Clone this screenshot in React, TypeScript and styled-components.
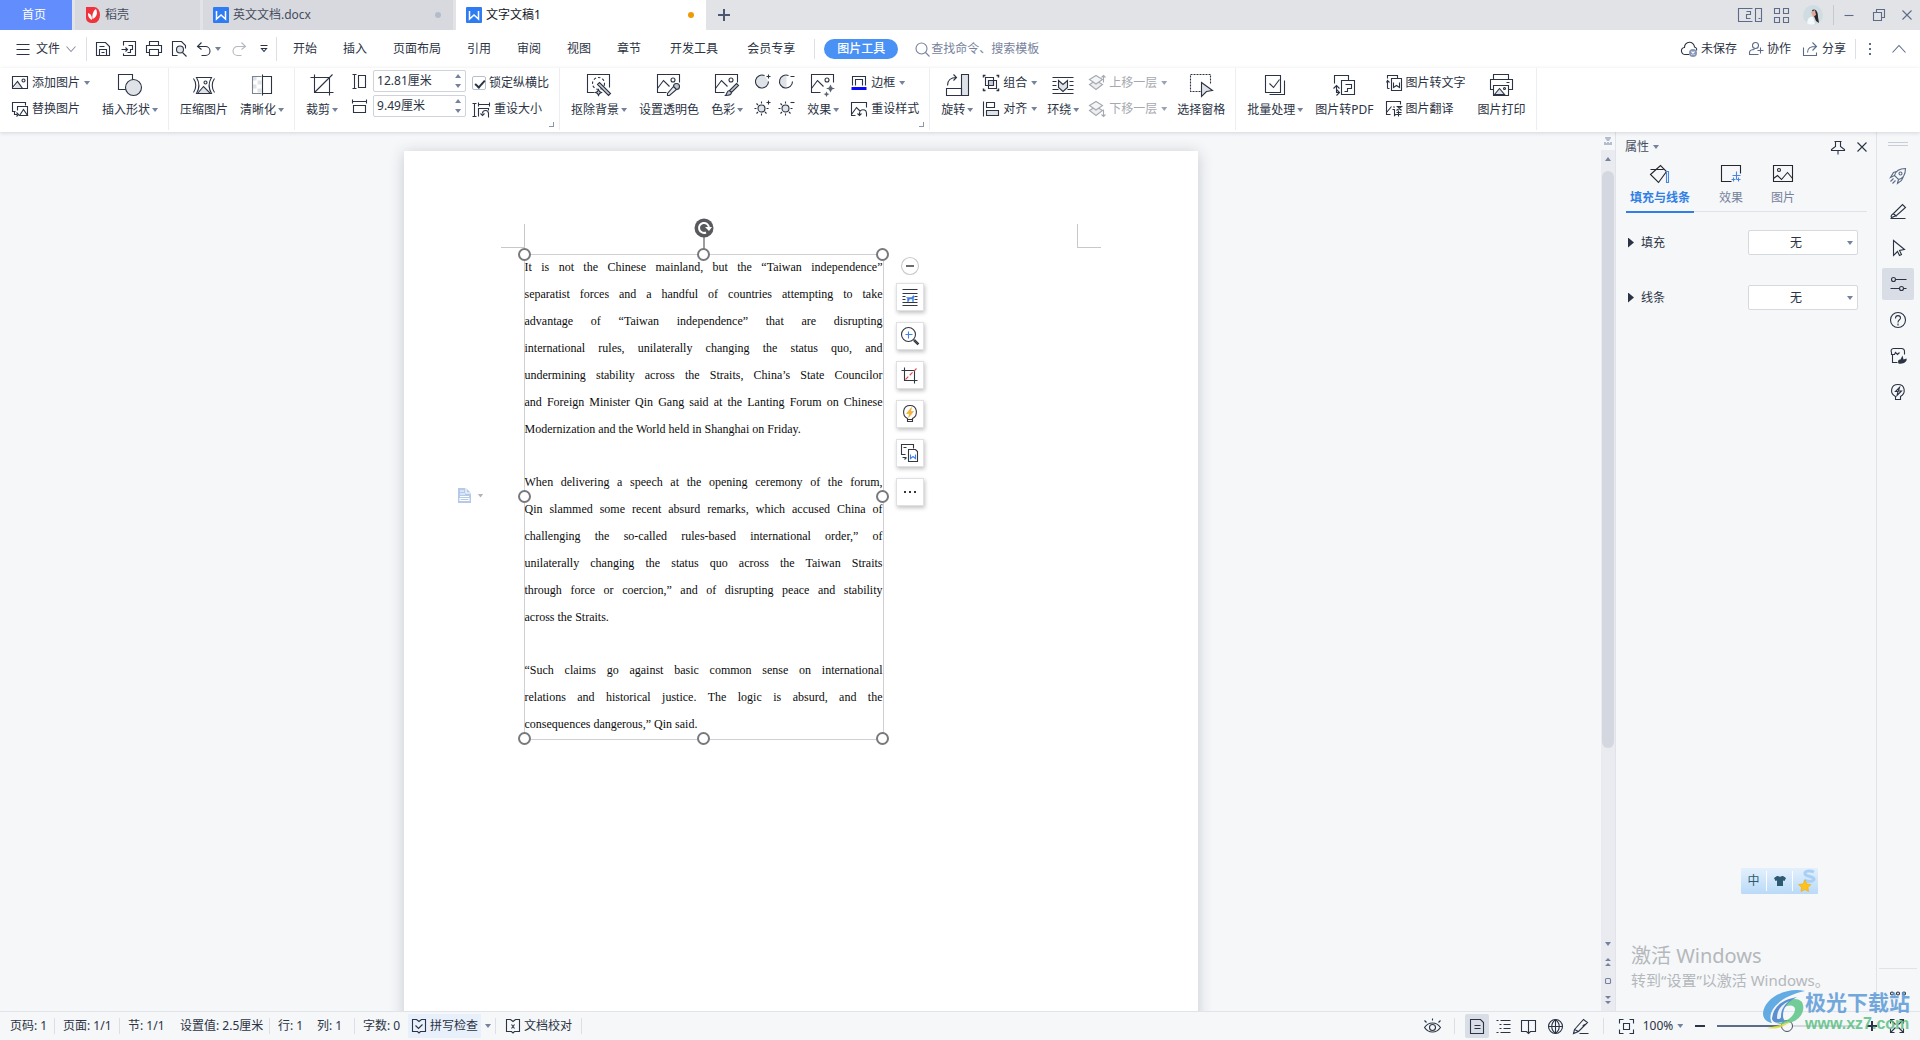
import React, { ReactNode } from "react";
import styled, { createGlobalStyle, css } from "styled-components";

const ink = "#2b3344";
const slate = "#5c6b8a";
const accent = "#2f7fe6";
const soft = "#dfe2e6";

const GlobalStyle = createGlobalStyle`
  * { box-sizing: border-box; }
  body {
    margin: 0;
    font: 12px/16px "Noto Sans", "Noto Sans CJK SC", sans-serif;
    color: ${ink};
    background: #f5f7f9;
  }
  button, input, select {
    font: inherit; color: inherit; background: none; border: 0; padding: 0; margin: 0;
  }
  button { white-space: nowrap; cursor: default; }
`;

/* ---------- primitives ---------- */

const Svg = styled.svg<{ $tone?: string }>`
  display: block;
  flex: none;
  fill: none;
  stroke: ${(p) => p.$tone ?? "currentColor"};
  stroke-width: 1.1;
  overflow: visible;
`;

/* Line drawings sit half a pixel in, so that whole coordinates give sharp strokes. */
type IconProps = { w?: number; h?: number; tone?: string; flat?: boolean; children: ReactNode };
const Icon = ({ w = 16, h = w, tone, flat, children }: IconProps) => (
  <Svg width={w} height={h} viewBox={flat ? `0 0 ${w} ${h}` : `-0.5 -0.5 ${w} ${h}`} $tone={tone} aria-hidden>
    {children}
  </Svg>
);

const Caret = styled.span<{ $up?: boolean; $tone?: string }>`
  flex: none;
  width: 6px;
  height: 4px;
  background: ${(p) => p.$tone ?? "#76829c"};
  clip-path: ${(p) => (p.$up ? "polygon(50% 0, 100% 100%, 0 100%)" : "polygon(0 0, 100% 0, 50% 100%)")};
`;

const Rule = styled.span<{ $h: number; $tone?: string }>`
  flex: none;
  width: 1px;
  height: ${(p) => p.$h}px;
  background: ${(p) => p.$tone ?? "#dcdfe5"};
`;

const Spacer = styled.span`
  flex: 1;
`;

const IconButton = styled.button<{ $w?: number; $h?: number; $on?: boolean }>`
  flex: none;
  display: flex;
  align-items: center;
  justify-content: center;
  gap: 4px;
  width: ${(p) => p.$w ?? 24}px;
  height: ${(p) => p.$h ?? 24}px;
  border-radius: 2px;
  background: ${(p) => (p.$on ? "#d9dee6" : "transparent")};
`;

/* ---------- shell ---------- */

const Shell = styled.div`
  position: relative;
  display: flex;
  flex-direction: column;
  height: 100vh;
  overflow: hidden;
`;

/* ---------- title bar ---------- */

const TitleBar = styled.header`
  display: flex;
  align-items: center;
  gap: 3px;
  height: 30px;
  flex: none;
  background: #e2e3e7;
`;

const DocTab = styled.button<{ $w: number; $kind?: "home" | "active" }>`
  display: flex;
  align-items: center;
  gap: 4px;
  width: ${(p) => p.$w}px;
  height: 30px;
  padding: 0 12px 0 10px;
  background: #d8d9de;
  color: #454d60;
  ${(p) => p.$kind === "home" && css`
    justify-content: center;
    padding: 0 4px 0 0;
    background: #618dfd;
    color: #fff;
  `}
  ${(p) => p.$kind === "active" && css`
    background: #fff;
    color: #14181f;
  `}
`;

const Dot = styled.span<{ $tone: string }>`
  width: 6px;
  height: 6px;
  border-radius: 50%;
  background: ${(p) => p.$tone};
`;

const WindowTools = styled.div`
  display: flex;
  align-items: center;
  color: ${slate};
`;

/* ---------- menu bar ---------- */

const MenuBar = styled.nav`
  display: flex;
  align-items: center;
  height: 38px;
  flex: none;
  padding: 0 6px 0 10px;
  background: #fff;
`;

const FileButton = styled.button`
  display: flex;
  align-items: center;
  gap: 6px;
  width: 76px;
  padding-left: 6px;
  height: 24px;
`;

const QuickBar = styled.div`
  display: flex;
  align-items: center;
  width: 189px;
  padding-left: 3px;
`;

const MenuTab = styled.button<{ $wide?: boolean }>`
  height: 24px;
  padding: 0 13px;
  margin-left: ${(p) => (p.$wide ? 3 : 0)}px;
`;

const MenuTabs = styled.div`
  display: flex;
  padding: 0 6px 0 3px;
`;

const Pill = styled.button`
  width: 74px;
  height: 20px;
  margin: 0 17px 0 9px;
  border-radius: 10px;
  background: #4a91f5;
  color: #fff;
  font-weight: 500;
`;

const Search = styled.label`
  display: flex;
  align-items: center;
  gap: 2px;
  color: #76829c;
  input { width: 130px; outline: 0; }
  input::placeholder { color: #76829c; opacity: 1; }
`;

const AccountBar = styled.div`
  display: flex;
  gap: 12px;
  padding-right: 9px;
`;

const AccountButton = styled.button`
  display: flex;
  align-items: center;
  gap: 4px;
`;

/* ---------- ribbon ---------- */

const Ribbon = styled.section`
  display: flex;
  height: 64px;
  flex: none;
  background: #fff;
  position: relative;
  z-index: 1;
  box-shadow: 0 1px 4px rgba(40, 50, 70, 0.16);
`;

const Group = styled.div<{ $tight?: boolean }>`
  position: relative;
  display: flex;
  gap: ${(p) => (p.$tight ? 10 : 12)}px;
  height: 62px;
  padding: 0 10px 0 11px;
  border-right: 1px solid #eceef1;
`;

const BigButton = styled.button`
  display: flex;
  flex-direction: column;
  align-items: center;
  height: 52px;
  padding-top: 4px;
`;

const BigIcon = styled.span`
  display: flex;
  align-items: center;
  height: 26px;
  margin-bottom: 4px;
`;

const Caption = styled.span`
  display: flex;
  align-items: center;
  gap: 2px;
`;

const Stack = styled.div`
  display: flex;
  flex-direction: column;
  gap: 6px;
  padding-top: 5px;
`;

const Quad = styled.div`
  display: grid;
  grid-template: 20px 20px / 16px 16px;
  gap: 6px 8px;
  padding-top: 4px;
`;

const SmallButton = styled.button<{ $off?: boolean }>`
  display: flex;
  align-items: center;
  gap: 4px;
  height: 20px;
  color: ${(p) => (p.$off ? "#a6a9b0" : "inherit")};
`;

const SizeRow = styled.div`
  display: flex;
  align-items: center;
  gap: 6px;
  height: 22px;
`;

const SizeStack = styled.div`
  display: flex;
  flex-direction: column;
  gap: 3px;
  margin-right: -6px;
  padding: 2px 0 0 2px;
`;

const SizeField = styled.span`
  display: flex;
  width: 93px;
  height: 22px;
  border: 1px solid #cdd2db;
  border-radius: 2px;
  input { width: 78px; padding-left: 3px; outline: 0; }
`;

const Spinner = styled.span`
  display: flex;
  flex-direction: column;
  justify-content: space-around;
  button { display: flex; padding: 3px; }
`;

const CheckRow = styled.label`
  display: flex;
  align-items: center;
  gap: 3px;
  height: 20px;
`;

const CheckBox = styled.input`
  && {
    appearance: none;
    position: relative;
    width: 14px;
    height: 14px;
    border: 1px solid #b9c0cc;
    border-radius: 2px;
  }
  &:checked::after {
    content: "";
    position: absolute;
    left: 4px;
    top: 1px;
    width: 4px;
    height: 8px;
    border: solid ${ink};
    border-width: 0 2px 2px 0;
    transform: rotate(42deg);
  }
`;

const Launcher = styled.span`
  position: absolute;
  right: 5px;
  bottom: 3px;
  width: 5px;
  height: 5px;
  border: solid #8b96ab;
  border-width: 0 1px 1px 0;
`;

/* ---------- workspace ---------- */

const Workspace = styled.main`
  display: flex;
  flex: 1;
  min-height: 0;
`;

const Canvas = styled.div`
  flex: 1;
  min-width: 0;
  overflow: hidden;
  padding-top: 19px;
`;

const Page = styled.article`
  position: relative;
  width: 794px;
  min-height: 1123px;
  margin: 0 auto;
  padding: 103px 120px;
  background: #fff;
  box-shadow: 0 2px 14px rgba(40, 46, 58, 0.22);
`;

const CropMark = styled.span<{ $side: "left" | "right" }>`
  position: absolute;
  top: 73px;
  ${(p) => p.$side}: 97px;
  width: 24px;
  height: 24px;
  border: solid #c6c8cc;
  border-width: ${(p) => (p.$side === "left" ? "0 1px 1px 0" : "0 0 1px 1px")};
`;

const Picture = styled.figure`
  position: relative;
  width: 360px;
  height: 486px;
  margin: 0;
  border: 1px solid #cfd0d3;
  color: #0c0c0c;
  font: 12px/27px "Liberation Serif", serif;
`;

const TextLine = styled.span<{ $last?: boolean }>`
  display: block;
  height: 27px;
  white-space: nowrap;
  text-align: justify;
  text-align-last: ${(p) => (p.$last ? "left" : "justify")};
`;

const Paragraph = styled.p`
  margin: -1px 0 27px;
`;

const Handle = styled.span<{ $x: number; $y: number }>`
  position: absolute;
  left: ${(p) => p.$x}%;
  top: ${(p) => p.$y}%;
  width: 13px;
  height: 13px;
  margin: -7px 0 0 -7px;
  border: 2px solid #77797d;
  border-radius: 50%;
  background: #fff;
`;

const Rotator = styled.span`
  position: absolute;
  left: 50%;
  top: -37px;
  margin-left: -10px;
`;

const PasteHint = styled.span`
  position: absolute;
  left: -67px;
  top: 233px;
  display: flex;
  align-items: center;
  gap: 7px;
`;

const FloatBar = styled.div`
  position: absolute;
  left: 371px;
  top: 2px;
  display: flex;
  flex-direction: column;
  align-items: center;
  gap: 11px;
`;

const FloatButton = styled.button`
  display: flex;
  align-items: center;
  justify-content: center;
  width: 28px;
  height: 28px;
  border: 1px solid #e0e1e4;
  background: #fff;
  color: #33373f;
  box-shadow: 1px 2px 4px rgba(0, 0, 0, 0.24);
`;

const Collapse = styled.button`
  display: flex;
  align-items: flex-start;
  height: 15px;
`;

/* ---------- scrollbar ---------- */

const ScrollRail = styled.div`
  display: flex;
  flex-direction: column;
  align-items: center;
  flex: none;
  width: 14px;
  padding-top: 5px;
  background: linear-gradient(#f5f7f9 18px, #e9ebf0 18px);
`;

const RailTop = styled.div`
  display: flex;
  flex-direction: column;
  align-items: center;
  gap: 11px;
`;

const Thumb = styled.span`
  width: 12px;
  flex: 0 0 66%;
  margin-top: 10px;
  border-radius: 6px;
  background: #d4d7e0;
`;

const RailEnd = styled.div`
  display: flex;
  flex-direction: column;
  align-items: center;
  gap: 12px;
  margin-top: auto;
  padding-bottom: 7px;
`;

/* ---------- property panel ---------- */

const Panel = styled.aside`
  flex: none;
  width: 262px;
  padding: 6px 9px 0 10px;
  border: solid #e0e3e8;
  border-width: 0 1px;
  background: #f5f7f9;
`;

const PanelHead = styled.div`
  display: flex;
  align-items: center;
  height: 18px;
  margin: 0 -7px 0 -1px;
`;

const PanelTitle = styled.button`
  display: flex;
  align-items: center;
  gap: 4px;
  color: #454d60;
`;

const PanelTabs = styled.div`
  display: flex;
  gap: 22px;
  height: 56px;
  border-bottom: 1px solid #dfe2e8;
`;

const PanelTab = styled.button<{ $on?: boolean }>`
  display: flex;
  flex-direction: column;
  align-items: center;
  gap: 7px;
  width: ${(p) => (p.$on ? 68 : 30)}px;
  height: 57px;
  padding-top: 9px;
  color: ${(p) => (p.$on ? accent : "#76829c")};
  font-weight: ${(p) => (p.$on ? 700 : 400)};
  border-bottom: 2px solid ${(p) => (p.$on ? accent : "transparent")};
`;

const PropertyRow = styled.label`
  display: flex;
  align-items: center;
  justify-content: space-between;
  height: 25px;
  margin: 18px 9px 30px 2px;
`;

const Expander = styled.span`
  display: flex;
  align-items: center;
  gap: 7px;
  &::before {
    content: "";
    width: 6px;
    height: 10px;
    background: ${ink};
    clip-path: polygon(0 0, 100% 50%, 0 100%);
  }
`;

const Picker = styled.span`
  position: relative;
  width: 110px;
  height: 25px;
  select {
    appearance: none;
    width: 100%;
    height: 100%;
    padding-right: 14px;
    border: 1px solid #d6d9de;
    border-radius: 2px;
    background: #fff;
    text-align: center;
    text-align-last: center;
    outline: 0;
  }
  ${Caret} { position: absolute; right: 5px; top: 11px; }
`;

const Dock = styled.aside`
  display: flex;
  flex-direction: column;
  align-items: center;
  flex: none;
  width: 43px;
  gap: 4px;
  padding: 10px 2px 15px 0;
`;

const Grip = styled.span`
  width: 20px;
  height: 4px;
  margin-bottom: 10px;
  border: solid #c9cdd4;
  border-width: 1px 0;
`;

const DockEnd = styled.div`
  display: flex;
  justify-content: center;
  width: 38px;
  margin-top: auto;
  padding-top: 22px;
  border-top: 1px solid #e0e3e8;
`;

/* ---------- status bar ---------- */

const StatusBar = styled.footer`
  display: flex;
  align-items: center;
  flex: none;
  height: 29px;
  padding: 0 8px 0 2px;
  border-top: 1px solid #e0e3e8;
  background: #f5f7f9;
`;

const StatusItem = styled.span<{ $w: number }>`
  width: ${(p) => p.$w}px;
  padding-left: 8px;
  white-space: nowrap;
`;

const StatusTool = styled.button<{ $on?: boolean }>`
  display: flex;
  align-items: center;
  gap: 3px;
  height: 24px;
  padding: ${(p) => (p.$on ? "0 3px" : "0 9px")};
  background: ${(p) => (p.$on ? "#e8f0fc" : "transparent")};
`;

const ToolSet = styled.div`
  display: flex;
  align-items: center;
  gap: 2px;
  padding: 0 10px;
`;

const ZoomSet = styled.div`
  display: flex;
  align-items: center;
  gap: 2px;
  padding-left: 10px;
`;

const ZoomSlider = styled.input`
  && {
    appearance: none;
    width: 140px;
    height: 14px;
    margin: 0 5px;
    background: linear-gradient(90deg, ${slate} 50%, #d3d7de 50%) center / 100% 2px no-repeat;
  }
  &::-webkit-slider-thumb {
    appearance: none;
    width: 12px;
    height: 12px;
    border: 1px solid #4a5263;
    border-radius: 50%;
    background: #f5f7f9;
  }
`;

/* ---------- overlays ---------- */

const InputMethod = styled.div`
  position: absolute;
  right: 102px;
  bottom: 146px;
  display: flex;
  width: 77px;
  height: 26px;
  align-items: center;
  border-radius: 1px;
  background: linear-gradient(#e4f0fc, #b9daf8);
  color: #2d5a72;
`;

const InputKey = styled.span`
  display: flex;
  flex: 1;
  justify-content: center;
`;

const Activation = styled.div`
  position: absolute;
  right: 91px;
  bottom: 49px;
  width: 198px;
  color: #b4b7bb;
  font-size: 15px;
  line-height: 22px;
  white-space: nowrap;
  strong { display: block; font-size: 20px; line-height: 26px; font-weight: 400; }
`;

const SiteMark = styled.div`
  position: absolute;
  right: 10px;
  bottom: 8px;
  display: flex;
  align-items: center;
  pointer-events: none;
  opacity: 0.85;
`;

const SiteName = styled.div`
  color: #5c9ad8;
  font-size: 21px;
  font-weight: 700;
  line-height: 28px;
  span { display: block; color: #5cc083; font: 700 16px/16px "Liberation Sans", sans-serif; }
`;

/* ---------- shared drawings ---------- */

const WpsIcon = () => (
  <Icon w={16} flat>
    <rect width="16" height="16" rx="1" fill="#2f7cf2" stroke="none" />
    <path d="M3.5 4v8l4.5-4 4.5 4V4" stroke="#fff" strokeWidth="1.5" />
  </Icon>
);

const Frame = ({ children }: { children?: ReactNode }) => (
  <Icon w={24} h={22}>
    <path d="M22 8V0H0v18h9M0 14l6-8 6 6" />
    <circle cx="15.500" cy="5.500" r="2" />
    {children}
  </Icon>
);

const Layers = ({ down }: { down?: boolean }) => (
  <Icon w={16}>
    <path d="M0 9l6.500-4L13 9l-6.500 5z" fill="#eceef0" />
    <path d="M0 4l6.500-4L13 4 6.500 8.500z" fill="#f4f5f6" />
    <path d={down ? "M14 8v7M12 13l2 2 2-2" : "M14 7V0M12 2l2-2 2 2"} />
  </Icon>
);

const Sun = ({ children }: { children: ReactNode }) => (
  <Icon w={16}>
    <circle cx="6" cy="8" r="3.500" fill={soft} />
    <path d="M6 1v2M6 13v2M-1 8h2M11 8h2M1 3l1.500 1.500M1 13l1.500-1.500M11 13l-1.500-1.500" />
    {children}
  </Icon>
);

const ProofMark = ({ children }: { children: ReactNode }) => (
  <Icon w={16}>
    <path d="M5 1H1v12h5l1.500 1.500L9 13h5V1h-4L7.500 3z" />
    {children}
  </Icon>
);

/* ---------- ribbon helpers ---------- */

const Big = ({ label, menu, children }: { label: string; menu?: boolean; children: ReactNode }) => (
  <BigButton>
    <BigIcon>{children}</BigIcon>
    <Caption>
      {label}
      {menu && <Caret />}
    </Caption>
  </BigButton>
);

const Small = ({ label, menu, off, children }: { label: string; menu?: boolean; off?: boolean; children: ReactNode }) => (
  <SmallButton $off={off}>
    {children}
    {label}
    {menu && <Caret $tone={off ? "#9aa3b5" : undefined} />}
  </SmallButton>
);

const Size = ({ name, value, children }: { name: string; value: string; children: ReactNode }) => (
  <SizeRow>
    {children}
    <SizeField>
      <input aria-label={name} defaultValue={value} />
      <Spinner>
        <button aria-label={`${name} +`}><Caret $up /></button>
        <button aria-label={`${name} -`}><Caret /></button>
      </Spinner>
    </SizeField>
  </SizeRow>
);

const paragraphs = [
  [
    "It is not the Chinese mainland, but the “Taiwan independence”",
    "separatist forces and a handful of countries attempting to take",
    "advantage of “Taiwan independence” that are disrupting",
    "international rules, unilaterally changing the status quo, and",
    "undermining stability across the Straits, China’s State Councilor",
    "and Foreign Minister Qin Gang said at the Lanting Forum on Chinese",
    "Modernization and the World held in Shanghai on Friday.",
  ],
  [
    "When delivering a speech at the opening ceremony of the forum,",
    "Qin slammed some recent absurd remarks, which accused China of",
    "challenging the so-called rules-based international order,” of",
    "unilaterally changing the status quo across the Taiwan Straits",
    "through force or coercion,” and of disrupting peace and stability",
    "across the Straits.",
  ],
  [
    "“Such claims go against basic common sense on international",
    "relations and historical justice. The logic is absurd, and the",
    "consequences dangerous,” Qin said.",
  ],
];

const handles = [[0, 0], [50, 0], [100, 0], [0, 50], [100, 50], [0, 100], [50, 100], [100, 100]];

const Titles = () => (
  <TitleBar>
    <DocTab $w={72} $kind="home">首页</DocTab>
    <DocTab $w={125}>
      <Icon w={16} flat>
        <path d="M1 0h8a6 8 0 0 1 0 16H6a5 5 0 0 1-5-5z" fill="#f0323c" stroke="none" />
        <path d="M7 13C3 11 3 8 3 6c3 1 4 3 4 7zM7.500 12C7 8 8 4 11 2c2 4 1 8-3.500 10z" fill="#fff" stroke="none" />
      </Icon>
      稻壳
    </DocTab>
    <DocTab $w={250}>
      <WpsIcon />英文文档.docx<Spacer /><Dot $tone="#b3bccb" />
    </DocTab>
    <DocTab $w={250} $kind="active">
      <WpsIcon />文字文稿1<Spacer /><Dot $tone="#ee9a08" />
    </DocTab>
    <IconButton $w={30} aria-label="新建">
      <Icon w={12} flat tone="#4c5872"><path d="M6 0v12M0 6h12" strokeWidth="2" /></Icon>
    </IconButton>
    <Spacer />
    <WindowTools>
      <IconButton $w={38} aria-label="窗口">
        <Icon w={24} h={14}>
          <path d="M14 0H0v13h14M17 0h6v13h-6z" />
          <path d="M8 3h4v3H8v4h4M20 10h2" />
        </Icon>
      </IconButton>
      <IconButton aria-label="应用">
        <Icon w={15}><path d="M0 0h5v5H0zM9 0h5v5H9zM0 9h5v5H0zM9 9h5v5H9z" /></Icon>
      </IconButton>
      <IconButton $w={40} aria-label="账号">
        <Icon w={20} flat>
          <circle cx="10" cy="10" r="10" fill="#cfdde2" stroke="none" />
          <path d="M9 5c4-2 6 2 6 7l1 6-3-2-2-5z" fill="#2b2529" stroke="none" />
          <path d="M8 7l4-2 1 5-3 2z" fill="#dfa99b" stroke="none" />
          <path d="M4 18c1-5 3-7 6-6l2 7c-3 1-6 1-8-1z" fill="#f3f8fa" stroke="none" />
        </Icon>
      </IconButton>
      <Rule $h={20} $tone="#c6c9d0" />
      <IconButton $w={30} aria-label="最小化"><Icon w={10}><path d="M0 5h9" /></Icon></IconButton>
      <IconButton $w={30} aria-label="还原">
        <Icon w={12}><path d="M0 3h8v8H0zM3 3V0h8v8H8" /></Icon>
      </IconButton>
      <IconButton $w={26} aria-label="关闭"><Icon w={10}><path d="M0 0l9 9M9 0L0 9" /></Icon></IconButton>
    </WindowTools>
  </TitleBar>
);

const Menus = () => (
  <MenuBar>
    <FileButton>
      <Icon w={14} h={11}><path d="M0 0h13M0 5h13M0 10h13" /></Icon>
      文件
      <Icon w={10} h={6} tone="#8d93a0"><path d="M0 0l4.500 5L9 0" /></Icon>
    </FileButton>
    <Rule $h={24} />
    <QuickBar>
      <IconButton $w={26} aria-label="保存">
        <Icon w={16}><path d="M1 1h9l4 4v9H1zM4 14V8h7v6M4 5h5M6 11h3" /></Icon>
      </IconButton>
      <IconButton $w={26} aria-label="输出为PDF">
        <Icon w={16}><path d="M2 4V0h12v14H2v-2M0 8h6M4 6l2 2-2 2M7 4h4v4H9v3H6" /></Icon>
      </IconButton>
      <IconButton $w={24} aria-label="打印">
        <Icon w={16}><path d="M3 4V0h9v4M3 11H0V4h15v7h-3M3 8h9v6H3z" /></Icon>
      </IconButton>
      <IconButton $w={26} aria-label="打印预览">
        <Icon w={16}>
          <path d="M6 14H1V0h9l4 4v3" />
          <circle cx="8.500" cy="8" r="3.500" fill={soft} />
          <path d="M11 11l4 4" />
        </Icon>
      </IconButton>
      <IconButton $w={34} aria-label="撤销">
        <Icon w={14}><path d="M4 0L0 4l4 3M0 4h8a4.500 4.500 0 0 1 0 9H4" /></Icon>
        <Caret />
      </IconButton>
      <IconButton $w={26} aria-label="恢复">
        <Icon w={14} tone="#b4b8c0"><path d="M9 0l4 4-4 3M13 4H5a4.500 4.500 0 0 0 0 9h4" /></Icon>
      </IconButton>
      <IconButton $w={23} aria-label="更多">
        <Icon w={8}><path d="M0 0h7M1 3h5L3.500 6z" /></Icon>
      </IconButton>
    </QuickBar>
    <Rule $h={24} />
    <MenuTabs>
      {["开始", "插入", "页面布局", "引用", "审阅", "视图", "章节"].map((t) => (
        <MenuTab key={t}>{t}</MenuTab>
      ))}
      <MenuTab $wide>开发工具</MenuTab>
      <MenuTab $wide>会员专享</MenuTab>
    </MenuTabs>
    <Rule $h={20} />
    <Pill>图片工具</Pill>
    <Search>
      <Icon w={14}><circle cx="6" cy="6" r="5.500" /><path d="M10 10l4 4" /></Icon>
      <input aria-label="搜索" placeholder="查找命令、搜索模板" />
    </Search>
    <Spacer />
    <AccountBar>
      <AccountButton>
        <Icon w={16}>
          <path d="M8 13H4a3.500 3.500 0 0 1-1-7 5 5 0 0 1 10-.5c2 .500 2.500 2 2 3.500" />
          <circle cx="11.500" cy="11.500" r="4" fill="#8796b5" stroke="none" />
          <path d="M10 10l3 3M13 10l-3 3" stroke="#fff" />
        </Icon>
        未保存
      </AccountButton>
      <AccountButton>
        <Icon w={14} tone={slate}><circle cx="6" cy="3" r="3" /><path d="M9 12H0V10c0-2 2-3 5-3M11 5v6M8 8h6" /></Icon>
        协作
      </AccountButton>
      <AccountButton>
        <Icon w={15} tone={slate}><path d="M0 5v8h13v-3M4 10c0-5 3-6 9-6M9 0l4 4-4 4" /></Icon>
        分享
      </AccountButton>
    </AccountBar>
    <Rule $h={20} />
    <IconButton $w={28} aria-label="更多选项">
      <Icon w={2} h={12} flat tone={slate}><path d="M1 0v2M1 5v2M1 10v2" strokeWidth="2" /></Icon>
    </IconButton>
    <IconButton $w={30} aria-label="收起功能区">
      <Icon w={14} h={8} tone={slate}><path d="M0 7L6.500 0 13 7" /></Icon>
    </IconButton>
  </MenuBar>
);

const Tools = () => (
  <Ribbon>
    <Group>
      <Stack>
        <Small label="添加图片" menu>
          <Icon w={17} h={14}>
            <path d="M2 12l5-7 5 7z" fill={soft} stroke="none" />
            <path d="M1 0h15v12H1zM1 11l5-6 5 7" /><circle cx="12" cy="4" r="1.500" />
          </Icon>
        </Small>
        <Small label="替换图片">
          <Icon w={17} h={14}>
            <path d="M4 9H1V0h13v3M16 13V4H6v4M8 13l4-6 4 6zM3 9v3h3M5 10l2 2-2 2" />
          </Icon>
        </Small>
      </Stack>
      <Big label="插入形状" menu>
        <Icon w={24} h={22}><path d="M0 0h14v15H0z" /><circle cx="15" cy="13" r="8" fill={soft} /></Icon>
      </Big>
    </Group>
    <Group>
      <Big label="压缩图片">
        <Icon w={24} h={17}>
          <path d="M5 16l6-7 7 7z" fill={soft} />
          <path d="M4 0h15c-3 5-3 11 0 16H4c3-5 3-11 0-16zM1 1c3 4 3 10 0 14M22 1c-3 4-3 10 0 14" />
          <circle cx="13" cy="5" r="1.500" />
        </Icon>
      </Big>
      <Big label="清晰化" menu>
        <Icon w={20} h={22}>
          <path d="M0 2h4v4H0zM5 6h4v4H5zM0 10h4v4H0zM5 14h4v4H5z" fill={soft} stroke="none" />
          <path d="M9 2H0v17h9" stroke="#7c8390" />
          <path d="M10 2h9v17h-9M10 0v21" />
        </Icon>
      </Big>
    </Group>
    <Group>
      <Big label="裁剪" menu>
        <Icon w={24} h={22}><path d="M4 0v18h19M0 3h19v18M22 0L4 18" /></Icon>
      </Big>
      <SizeStack>
        <Size name="高度" value="12.81厘米">
          <Icon w={15}><path d="M0 0h4M0 14h4M2 0v14M6 1h7v12H6z" /></Icon>
        </Size>
        <Size name="宽度" value="9.49厘米">
          <Icon w={15} h={14}><path d="M0 0v4M14 0v4M0 2h14M1 6h12v7H1z" /></Icon>
        </Size>
      </SizeStack>
      <Stack>
        <CheckRow>
          <CheckBox type="checkbox" defaultChecked />
          锁定纵横比
        </CheckRow>
        <Small label="重设大小">
          <Icon w={18} h={15}><path d="M2 1v13M0 1h4M0 14h4M6 2h11M6 0v4M17 0v4M6 14V6h10v2M10 11c0-4 6-4 6 0v4M8 11l2 2 2-2" /></Icon>
        </Small>
      </Stack>
      <Launcher />
    </Group>
    <Group>
      <Big label="抠除背景" menu>
        <Icon w={24} h={22}>
          <path d="M7 18H0V0h22v13" />
          <circle cx="11" cy="9" r="6" strokeDasharray="2.500 2" />
          <path d="M10 10l2-2 11 11-2 2zM11 15l1 2 2 1-2 1-1 2-1-2-2-1 2-1z" fill="#c9cdd4" />
        </Icon>
      </Big>
      <Big label="设置透明色">
        <Frame><circle cx="19" cy="12" r="3" fill="#c0c5cd" /><path d="M16 12l3 3-7 6h-2v-2z" fill="#e8eaed" /></Frame>
      </Big>
      <Big label="色彩" menu>
        <Frame><path d="M21 9l2 2-7 7-2-2zM14 16l2 2c0 2-2 3-6 3 2-2 1-5 4-5z" fill="#c0c5cd" /></Frame>
      </Big>
      <Quad>
        <SmallButton aria-label="增加对比度">
          <Icon w={16}><path d="M9 1a6.500 6.500 0 1 0 4 6" fill={soft} /><path d="M13 0v4M11 2h4" /></Icon>
        </SmallButton>
        <SmallButton aria-label="降低对比度">
          <Icon w={16}><path d="M7 1a6.500 6.500 0 0 0 0 13z" fill={soft} stroke="none" /><path d="M9 1a6.500 6.500 0 1 0 4 6M11 2h4" /></Icon>
        </SmallButton>
        <SmallButton aria-label="增加亮度"><Sun><path d="M13 0v4M11 2h4" /></Sun></SmallButton>
        <SmallButton aria-label="降低亮度"><Sun><path d="M11 2h4" /></Sun></SmallButton>
      </Quad>
      <Big label="效果" menu>
        <Frame>
          <path d="M19 10l1.500 3 3 1-3 1-1.500 3-1.500-3-3-1 3-1zM15 17l1 2 2 .5-2 1-1 2-1-2-2-1 2-.5z" fill="#5b6270" stroke="none" />
        </Frame>
      </Big>
      <Stack>
        <Small label="边框" menu>
          <Icon w={16} h={14}><path d="M1 9V0h13v9M4 9V3h7v6" /><path d="M0 12h15" stroke="#0a0aff" strokeWidth="3" /></Icon>
        </Small>
        <Small label="重设样式">
          <Icon w={16} h={14}><path d="M4 13H0V0h15v5M0 12l5-7 4 4M8 13v-2c0-5 7-5 7 0v3M6 11l2 2 2-2" /></Icon>
        </Small>
      </Stack>
      <Launcher />
    </Group>
    <Group $tight>
      <Big label="旋转" menu>
        <Icon w={23} h={22}><path d="M15 0h7v21h-7z" fill={soft} /><path d="M0 14h15v7H0zM1 11c0-5 3-8 9-8M7 0l3 3-3 3" /></Icon>
      </Big>
      <Stack>
        <Small label="组合" menu>
          <Icon w={16}>
            <path d="M2 2h8v8H2zM5 5h8v8H5z" /><path d="M5 5h5v5H5z" fill="#c9cdd4" />
            <path d="M0 2V0h2M13 0h2v2M0 13v2h2M13 15h2v-2" strokeWidth="1.500" />
          </Icon>
        </Small>
        <Small label="对齐" menu>
          <Icon w={16}><path d="M0 0v15M3 1h8v5H3z" /><path d="M3 9h12v5H3z" fill={soft} /></Icon>
        </Small>
      </Stack>
      <Big label="环绕" menu>
        <Icon w={22} h={17}>
          <path d="M0 0h21M0 16h21M0 4h4M17 4h4M0 8h4M17 8h4M0 12h6M15 12h6" />
          <path d="M6 3l4.500 4L15 3v7l-4.500 4L6 10z" fill={soft} />
        </Icon>
      </Big>
      <Stack>
        <Small label="上移一层" menu off><Layers /></Small>
        <Small label="下移一层" menu off><Layers down /></Small>
      </Stack>
      <Big label="选择窗格">
        <Icon w={23} h={22}>
          <path d="M10 17H0V0h20v9" strokeDasharray="2 1" />
          <path d="M11 8l11 8-6 1-5 5z" fill={soft} />
        </Icon>
      </Big>
    </Group>
    <Group>
      <Big label="批量处理" menu>
        <Icon w={20} h={22}><path d="M0 1h15v17H0zM4 20h15V6M4 9l4 4 6-8" /></Icon>
      </Big>
      <Big label="图片转PDF">
        <Icon w={22} h={20}><path d="M15 5V0H1v8M8 5h13v14H8zM12 9h6v4h-4v3h-3M6 17H3v-6M0 13l3-3 3 3M3 20l3-3-3-3" /></Icon>
      </Big>
      <Stack>
        <Small label="图片转文字">
          <Icon w={16}><path d="M11 3V0H1v3M5 3h10v12H5zM7 7v5l3-2 3 2V7M1 13h2M1 5v8M0 7l1-2 2 2" /></Icon>
        </Small>
        <Small label="图片翻译">
          <Icon w={16}><path d="M4 13H0V0h14v3M0 11l5-6M7 5l1 1M6 8h2v6l1-1M10 5h5l-5 4M11 5l4 4M12 9v6M10 11h5M9 13h6" /></Icon>
        </Small>
      </Stack>
      <Big label="图片打印">
        <Icon w={23} h={22}>
          <path d="M3 5V0h15v5M3 15H0V5h22v10h-4M3 11h15v10H3zM16 8h3" />
          <path d="M4 20l5-6 5 6z" fill={soft} />
          <circle cx="14" cy="14" r="1" />
        </Icon>
      </Big>
    </Group>
  </Ribbon>
);

const Selection = () => (
  <Picture>
    {paragraphs.map((lines, i) => (
      <Paragraph key={i}>
        {lines.map((line, j) => (
          <TextLine key={j} $last={j === lines.length - 1}>{line}</TextLine>
        ))}
      </Paragraph>
    ))}
    <Rotator>
      <Icon w={20} h={36} flat>
        <path d="M10 18v18" stroke="#4b4d50" />
        <circle cx="10" cy="10" r="9.500" fill="#58595c" stroke="none" />
        <path d="M12 14.500a5 5 0 1 1 3-5" stroke="#fff" strokeWidth="2" />
        <path d="M11 9h7l-3 4z" fill="#fff" stroke="none" />
      </Icon>
    </Rotator>
    {handles.map(([x, y]) => <Handle key={`${x}-${y}`} $x={x} $y={y} />)}
    <PasteHint>
      <Icon w={13} h={15} flat>
        <path d="M0 0h8l5 5v10H0z" fill="#b5c9e8" stroke="none" />
        <path d="M8 0v5h5M2 3h4M2 6h5M2 8.500h9M2 12.500h9v-2H2z" stroke="#fff" />
      </Icon>
      <Caret $tone="#b0b3b8" />
    </PasteHint>
    <FloatBar>
      <Collapse aria-label="收起">
        <Icon w={18} flat><circle cx="9" cy="9" r="8.500" fill="#fff" stroke="#c9cacd" /><path d="M5 9h8" stroke="#6a6c70" strokeWidth="2" /></Icon>
      </Collapse>
      <FloatButton aria-label="布局选项">
        <Icon w={16} h={17}>
          <path d="M0 0h15M0 4h15M0 7h3M12 7h3M0 10h3M12 10h3M0 13h15M0 16h15" />
          <path d="M5 12V9L4 8h5l2-2 1 1-1 2v3h-1V9.500H7L6 12z" fill="#4080df" stroke="#4080df" strokeWidth=".5" />
        </Icon>
      </FloatButton>
      <FloatButton aria-label="放大">
        <Icon w={18}><circle cx="7" cy="7" r="7" /><path d="M12 13l4 4 1-1-4-4" fill="#aeb4be" /><path d="M7 4v7M4 7h7" stroke="#3f82e8" /></Icon>
      </FloatButton>
      <FloatButton aria-label="裁剪">
        <Icon w={17}><path d="M3 0v13h13M0 3h13v13" /><path d="M4 12L15 1" stroke="#e5484d" strokeDasharray="4 2" /></Icon>
      </FloatButton>
      <FloatButton aria-label="智能工具">
        <Icon w={14} h={18}>
          <path d="M4 13C-2 10-1 0 6.500 0S15 10 9 13v3H4zM4 14h5" />
          <path d="M8 2L3 8h3l-1 4 5-6H7z" fill="#f8b62c" stroke="#e89a1c" strokeWidth=".5" />
        </Icon>
      </FloatButton>
      <FloatButton aria-label="转文字">
        <Icon w={18}>
          <path d="M12 4V0H0v10h4M7 5h7l2 2v10H7zM1 13h4M3 15l2-2M2 3h3" />
          <path d="M9 10v4l2.500-2 2.500 2v-4" stroke="#3f82e8" />
        </Icon>
      </FloatButton>
      <FloatButton aria-label="更多">
        <Icon w={12} h={2} flat><path d="M0 1h2M5 1h2M10 1h2" strokeWidth="2" /></Icon>
      </FloatButton>
    </FloatBar>
  </Picture>
);

const dock: [string, ReactNode][] = [
  ["快捷", <g stroke={slate}><path d="M4 7c1-4 5-7 11-7 0 6-3 10-7 11zM4 7L0 9l3-5 3-1M8 11l-1 4 4-3 2-4M3 10l-3 3M5 12l-3 3" /><circle cx="10" cy="5" r="1.500" /></g>],
  ["样式", <path d="M0 14h15M3 9l9-9 3 3-9 8-5 2c-1-1 0-3 2-4zM3 9l3 3" />],
  ["选择", <path d="M3 0l11 9-5 1 2 4-2 1-2-4-4 4z" />],
  ["属性", <><path d="M5 3h11M0 12h9M13 12h3" /><circle cx="3" cy="3" r="2" /><circle cx="11" cy="12" r="2" /></>],
  ["帮助", <><circle cx="7.500" cy="7.500" r="7.500" /><path d="M5 6c0-4 5-3.500 5-.5C10 7.500 7.500 7 7.500 10M7.500 11v2" /></>],
  ["稻壳", <><path d="M14 6V3c0-2-1-3-3-3H3C1 0 0 2 1 4v2h3l1-2 2 2 2-2M2 6v8h5" /><path d="M8 15c-1-3 0-4 2-4l2-4 1 4 3-1c1 3-3 6-8 5z" fill={ink} stroke="none" /></>],
  ["推荐", <><path d="M5 12C-1 9 0 0 7.500 0s8 9 2.500 12v3H5z" /><path d="M9 3L5 7h2.500L6.500 11 11 6.500H8z" /></>],
];

const Work = () => (
  <Workspace>
    <Canvas>
      <Page>
        <CropMark $side="left" />
        <CropMark $side="right" />
        <Selection />
      </Page>
    </Canvas>
    <ScrollRail>
      <RailTop>
        <Icon w={8} h={9} flat><path d="M1 0h6v1L5 4H3L1 1zM0 8V5h2v1h1V5h2v1h1V5h2v3z" fill="#b4bccd" stroke="none" /></Icon>
        <Caret $up />
      </RailTop>
      <Thumb />
      <RailEnd>
        <Caret />
        <Icon w={6} h={8} flat><path d="M0 3l3-3 3 3zM0 8l3-3 3 3z" fill="#76829c" stroke="none" /></Icon>
        <Icon w={6} tone="#76829c"><rect width="5" height="5" rx="1" /></Icon>
        <Icon w={6} h={8} flat><path d="M0 0l3 3 3-3zM0 5l3 3 3-3z" fill="#76829c" stroke="none" /></Icon>
      </RailEnd>
    </ScrollRail>
    <Panel>
      <PanelHead>
        <PanelTitle>属性<Caret /></PanelTitle>
        <Spacer />
        <IconButton $h={18} aria-label="固定">
          <Icon w={14} h={13}><path d="M3 0h7M4 0v5L0 8v1h13V8L9 5V0M6.500 9v4" /></Icon>
        </IconButton>
        <IconButton $h={18} aria-label="关闭面板">
          <Icon w={10}><path d="M0 0l9 9M9 0L0 9" /></Icon>
        </IconButton>
      </PanelHead>
      <PanelTabs>
        <PanelTab $on>
          <Icon w={20} h={18} tone="#24272e">
            <path d="M0 9l10-9 6 6-8 11zM0 4h13" /><path d="M16 6h2v11h-2z" stroke="#4a86df" />
          </Icon>
          填充与线条
        </PanelTab>
        <PanelTab>
          <Icon w={20} h={18} tone="#24272e">
            <path d="M10 16H0V0h19v8" /><path d="M15 6v8M11 10h8M12 12v4M10 14h4M17 12v4M15 14h4" stroke="#4a86df" />
          </Icon>
          效果
        </PanelTab>
        <PanelTab>
          <Icon w={20} h={18} tone="#24272e">
            <path d="M0 0h19v16H0zM0 13l4-3 4 4 6-7 5 6" /><circle cx="5.500" cy="4.500" r="1.500" />
          </Icon>
          图片
        </PanelTab>
      </PanelTabs>
      {["填充", "线条"].map((name) => (
        <PropertyRow key={name}>
          <Expander>{name}</Expander>
          <Picker>
            <select defaultValue="无"><option>无</option></select>
            <Caret />
          </Picker>
        </PropertyRow>
      ))}
    </Panel>
    <Dock>
      <Grip />
      {dock.map(([name, art]) => (
        <IconButton key={name} $w={32} $h={32} $on={name === "属性"} aria-label={name}>
          <Icon w={16}>{art}</Icon>
        </IconButton>
      ))}
      <DockEnd>
        <Icon w={16} h={5} flat><circle cx="2" cy="2.500" r="1.500" /><circle cx="8" cy="2.500" r="1.500" /><circle cx="14" cy="2.500" r="1.500" /></Icon>
      </DockEnd>
    </Dock>
  </Workspace>
);

const Status = () => (
  <StatusBar>
    <StatusItem $w={52}>页码: 1</StatusItem>
    <Rule $h={16} />
    <StatusItem $w={64}>页面: 1/1</StatusItem>
    <Rule $h={16} />
    <StatusItem $w={52}>节: 1/1</StatusItem>
    <StatusItem $w={97}>设置值: 2.5厘米</StatusItem>
    <Rule $h={16} />
    <StatusItem $w={39}>行: 1</StatusItem>
    <StatusItem $w={45}>列: 1</StatusItem>
    <Rule $h={16} />
    <StatusItem $w={53}>字数: 0</StatusItem>
    <StatusTool $on>
      <ProofMark><path d="M4 7l3 3 4-4" /></ProofMark>
      拼写检查
    </StatusTool>
    <IconButton $w={14} aria-label="拼写选项"><Caret /></IconButton>
    <Rule $h={16} />
    <StatusTool>
      <ProofMark><path d="M6 6l3 4M9 6l-3 4" /></ProofMark>
      文档校对
    </StatusTool>
    <Rule $h={16} />
    <Spacer />
    <ToolSet>
      <IconButton aria-label="护眼模式">
        <Icon w={17} h={16}><path d="M0 9c4-6 12-6 16 0-4 6-12 6-16 0zM8 2V0M2 4L0 2M14 4l2-2" /><circle cx="8" cy="9" r="3" /></Icon>
      </IconButton>
    </ToolSet>
    <Rule $h={16} />
    <ToolSet>
      <IconButton $on aria-label="页面视图">
        <Icon w={15}><path d="M0 0h10l3 3v11H0zM4 6h6M4 9h6" /></Icon>
      </IconButton>
      <IconButton aria-label="大纲">
        <Icon w={15}><path d="M0 1h2M4 1h10M3 5h2M7 5h7M3 9h2M7 9h7M0 13h2M4 13h10" /></Icon>
      </IconButton>
      <IconButton aria-label="阅读版式">
        <Icon w={16} h={15}><path d="M7 1H0v11h5l2 2 2-2h5V1zM7 1v12" /></Icon>
      </IconButton>
      <IconButton aria-label="Web版式">
        <Icon w={15}><circle cx="7" cy="7" r="7" /><path d="M7 0v14M0 7h14M7 0C2 4 2 10 7 14M7 0c5 4 5 10 0 14" /></Icon>
      </IconButton>
      <IconButton aria-label="写作模式">
        <Icon w={16} h={15}><path d="M6 14h9M1 10l9-10 4 3-9 9-5 2zM1 10l4 2M9 7l2-2" /></Icon>
      </IconButton>
    </ToolSet>
    <Rule $h={16} />
    <ZoomSet>
      <IconButton aria-label="适合页面">
        <Icon w={15}><path d="M0 4V0h4M10 0h4v4M0 10v4h4M10 14h4v-4M4 4h6v6H4z" /></Icon>
      </IconButton>
      <IconButton $w={46} aria-label="缩放比例">100%<Caret /></IconButton>
      <IconButton aria-label="缩小"><Icon w={10} flat><path d="M0 5h10" strokeWidth="2" /></Icon></IconButton>
    </ZoomSet>
    <ZoomSlider type="range" aria-label="缩放" min={0} max={100} defaultValue={50} />
    <IconButton $w={20} aria-label="放大"><Icon w={10} flat><path d="M0 5h10M5 0v10" strokeWidth="2" /></Icon></IconButton>
    <IconButton $w={30} aria-label="全屏">
      <Icon w={14}><path d="M0 4V0h4M9 0h4v4M0 9v4h4M9 13h4V9M0 0l5 5M13 0L8 5M0 13l5-5M13 13L8 8" /></Icon>
    </IconButton>
  </StatusBar>
);

export default function App() {
  return (
    <Shell>
      <GlobalStyle />
      <Titles />
      <Menus />
      <Tools />
      <Work />
      <Status />
      <InputMethod>
        <InputKey>中</InputKey>
        <Rule $h={20} $tone="#fff" />
        <InputKey>
          <Icon w={12} h={10} flat><path d="M3 0h1c1 1 3 1 4 0h1l3 2-1.500 3L9 4.500V10H3V4.500L1.500 5 0 2z" fill="#2d5a72" stroke="none" /></Icon>
        </InputKey>
        <Rule $h={20} $tone="#fff" />
        <InputKey>
          <Icon w={20} h={24} flat>
            <path d="M18 3c-4-2-10-1-9 2s9 2 9 5-7 3-10 1" stroke="#a9d0f4" strokeWidth="3" />
            <path d="M9 11l2 4 4 .5-3 3 .5 4-3.500-2-4 2 .5-4-3-3L7 15z" fill="#ffc21a" stroke="#f2a100" strokeWidth=".5" />
          </Icon>
        </InputKey>
      </InputMethod>
      <Activation>
        <strong>激活 Windows</strong>
        转到“设置”以激活 Windows。
      </Activation>
      <SiteMark>
        <Icon w={42} h={42} flat>
          <path d="M42 2C24-2 2 8 0 24c0 7 5 9 9 10C3 24 14 8 42 2z" fill="#4a9fe0" stroke="none" />
          <path d="M39 13c5 10-4 24-26 22 10-2 18-7 19-14 1-5-8-7-13 0 0-9 14-15 20-8z" fill="#5cc587" stroke="none" />
          <path d="M4 39c8 2 18-1 24-7-7 3-14 5-24 7z" fill="#e3dc3f" stroke="none" />
          <path d="M9 30C10 18 18 11 34 8c-10 5-14 11-14 19 0 2 1 4 2 5-7 3-12 2-13-2z" fill="#3f7fc9" stroke="none" />
          <path d="M14 29c0-8 4-13 12-17-6 5-8 10-8 16 0 2-4 3-4 1z" fill="#e8f2fb" stroke="none" />
        </Icon>
        <SiteName>
          极光下载站
          <span>www.xz7.com</span>
        </SiteName>
      </SiteMark>
    </Shell>
  );
}
